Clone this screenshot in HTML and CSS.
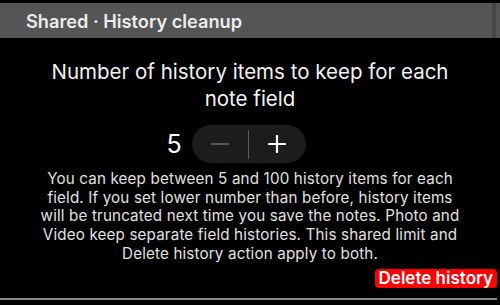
FILE: index.html
```html
<!DOCTYPE html>
<html lang="en">
  <head>
    <meta charset="UTF-8" />
    <title>History cleanup</title>
    <link rel="stylesheet" href="styles.css">
  </head>
  <body>
    <header class="bar">
      <h1>Shared · History cleanup</h1>
    </header>

    <main class="panel">
      <h2 class="question">Number of history items to keep for each note field</h2>

      <div class="stepper-row">
        <span class="count">5</span>
        <div class="stepper">
          <button class="step step-minus" aria-label="Decrease">
            <svg width="18" height="18" viewBox="0 0 18 18"><path d="M1 9h16" stroke="currentColor" stroke-width="2" stroke-linecap="round"/></svg>
          </button>
          <span class="step-divider"></span>
          <button class="step step-plus" aria-label="Increase">
            <svg width="18" height="18" viewBox="0 0 18 18"><path d="M1 9h16M9 1v16" stroke="currentColor" stroke-width="2.2" stroke-linecap="round"/></svg>
          </button>
        </div>
      </div>

      <p class="note">
        You can keep between 5 and 100 history items for each field. If you set lower number than before, history items will be truncated next time you save the notes. Photo and Video keep separate field histories. This shared limit and Delete history action apply to both.
      </p>

      <div class="actions">
        <button class="delete">Delete history</button>
      </div>
    </main>

    <div class="bottom-rule"></div>
  </body>
</html>
```

FILE: styles.css
```css
:root {
  --bar: #555555;
  --text: #e6e6e6;
  --pill: #1c1c1e;
  --danger: #ff0000;
}

body {
  margin: 0;
  background: #000;
  color: #fff;
  font-family: Inter, "Noto Sans", sans-serif;
  height: 305px;
  overflow: hidden;
}

/* window bar, with the thin divider near the right edge */
.bar {
  margin-top: 3px;
  height: 35px;
  background: linear-gradient(to left, var(--bar) 0 4px, #464646 4px 8px, var(--bar) 8px);
  display: flex;
  align-items: center;
  padding-left: 26px;
  box-sizing: border-box;
}

.bar h1 {
  margin: 0;
  font-size: 18.2px;
  font-weight: 600;
  color: #ececec;
}

.panel {
  display: flex;
  flex-direction: column;
  align-items: center;
  padding-top: 20px;
}

.question {
  margin: 0;
  width: 410px;
  text-align: center;
  font-size: 20.5px;
  font-weight: 400;
  line-height: 27px;
  color: #f2f2f2;
}

.stepper-row {
  display: flex;
  align-items: center;
  gap: 10px;
  margin-top: 13px;
  margin-left: -28px;
}

.count {
  font-size: 25px;
  color: #fff;
}

.stepper {
  display: flex;
  align-items: center;
  width: 114px;
  height: 38px;
  border-radius: 19px;
  background: var(--pill);
}

.step {
  flex: 1;
  height: 100%;
  border: none;
  background: none;
  padding: 0;
  display: flex;
  align-items: center;
  justify-content: center;
  cursor: pointer;
}

.step-minus {
  color: #5a5a5e;
}

.step-plus {
  color: #fff;
}

.step-divider {
  width: 1px;
  height: 29px;
  background: #5a5a5e;
}

.note {
  margin: 7px 0 0;
  width: 420px;
  text-align: center;
  font-size: 15.2px;
  letter-spacing: 0.15px;
  line-height: 18.7px;
  color: #e0e0e0;
}

.actions {
  align-self: stretch;
  display: flex;
  justify-content: flex-end;
  padding-right: 3px;
  margin-top: 5px;
}

.delete {
  background: var(--danger);
  color: #fff;
  border: none;
  border-radius: 4px;
  font-family: inherit;
  font-size: 17px;
  font-weight: 600;
  height: 19px;
  line-height: 19px;
  padding: 0 4px;
  cursor: pointer;
}

.bottom-rule {
  position: absolute;
  left: 0;
  right: 3px;
  top: 298px;
  height: 2px;
  background: #8a8a8a;
}
```
